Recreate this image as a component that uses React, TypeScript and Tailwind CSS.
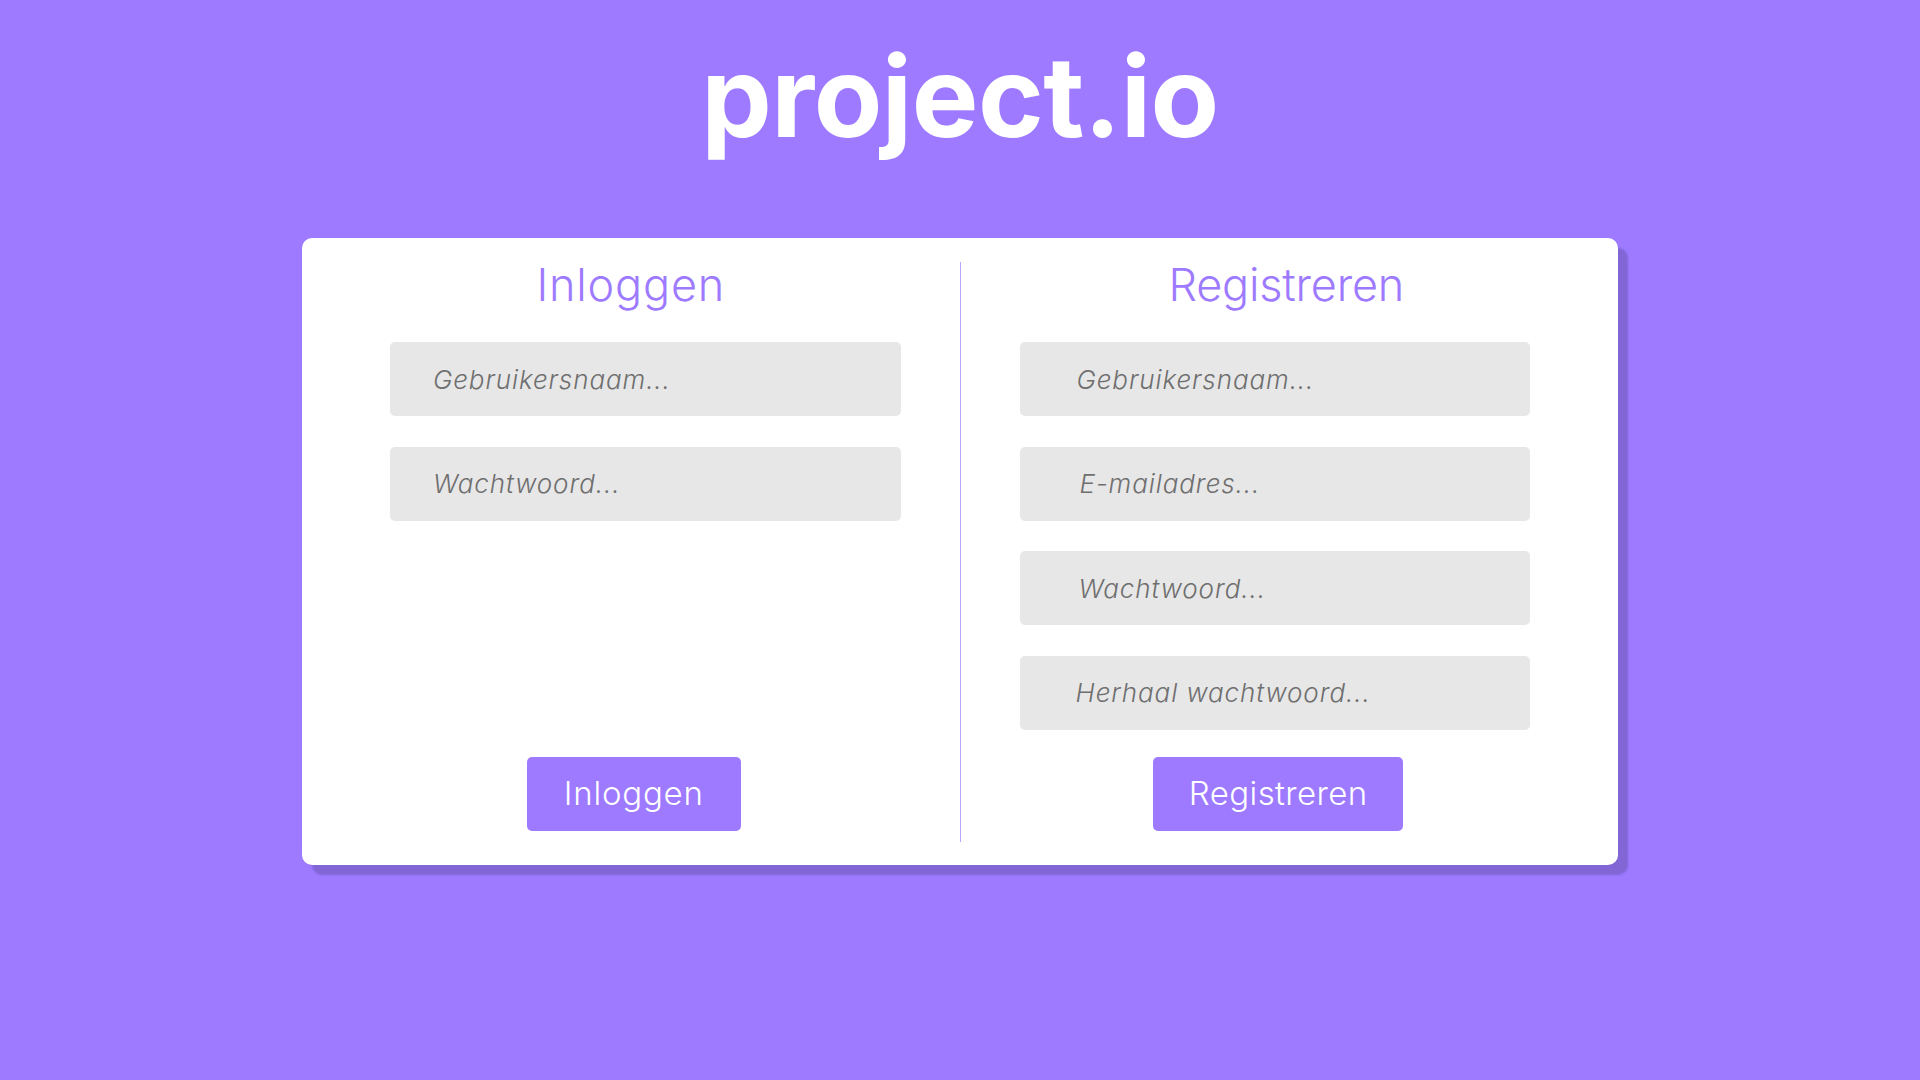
const inputClass =
  "h-[74px] w-full rounded-[5px] bg-[#e7e7e7] text-[26px] italic font-light text-[#555] outline-none placeholder:text-[#6f6f6f] placeholder:italic tracking-[0.9px] font-['Inter',sans-serif]";

const LoginColumn = () => {
  return (
    <div className="flex flex-1 flex-col">
      <h2 className="text-center text-[45px] leading-none font-light text-[#9d7aff] tracking-[0.8px]">
        Inloggen
      </h2>
      <div className="mt-[35px] ml-[88px] mr-[59px] flex flex-col gap-[30.5px]">
        <input className={inputClass + " pl-[43px]"} placeholder="Gebruikersnaam..." />
        <input className={inputClass + " pl-[43px]"} type="password" placeholder="Wachtwoord..." />
      </div>
      <div className="mt-auto mb-[11px] flex justify-center pl-[6px]">
        <button className="h-[74px] w-[214px] rounded-[5px] bg-[#9d7aff] text-[33px] font-light text-white tracking-[0.8px]">
          Inloggen
        </button>
      </div>
    </div>
  );
};

const RegisterColumn = () => {
  return (
    <div className="flex flex-1 flex-col">
      <h2 className="text-center text-[45px] leading-none font-light text-[#9d7aff] tracking-[-0.2px] pr-[6px]">
        Registreren
      </h2>
      <div className="mt-[35px] ml-[59px] mr-[88px] flex flex-col gap-[30.5px]">
        <input className={inputClass + " pl-[57px]"} placeholder="Gebruikersnaam..." />
        <input className={inputClass + " pl-[60px]"} type="email" placeholder="E-mailadres..." />
        <input className={inputClass + " pl-[59px]"} type="password" placeholder="Wachtwoord..." />
        <input className={inputClass + " pl-[56px]"} type="password" placeholder="Herhaal wachtwoord..." />
      </div>
      <div className="mt-auto mb-[11px] flex justify-center pr-[22px]">
        <button className="h-[74px] w-[250px] rounded-[5px] bg-[#9d7aff] text-[33px] font-light text-white tracking-[0.4px]">
          Registreren
        </button>
      </div>
    </div>
  );
};

export default function App() {
  return (
    <div className="min-h-screen w-full bg-[#9d7aff] font-['Inter',sans-serif] flex flex-col items-center pt-[40px]">
      <h1 className="text-[112px] leading-none font-bold text-white tracking-[-0.5px]">project.io</h1>
      <div className="mt-[86px] w-[1316px] h-[627px] rounded-[10px] bg-white pt-[24px] pb-[23px] flex shadow-[10px_10px_2px_#8266d6]">
        <LoginColumn />
        <div className="w-px bg-[#bba6ff]" />
        <RegisterColumn />
      </div>
    </div>
  );
}
